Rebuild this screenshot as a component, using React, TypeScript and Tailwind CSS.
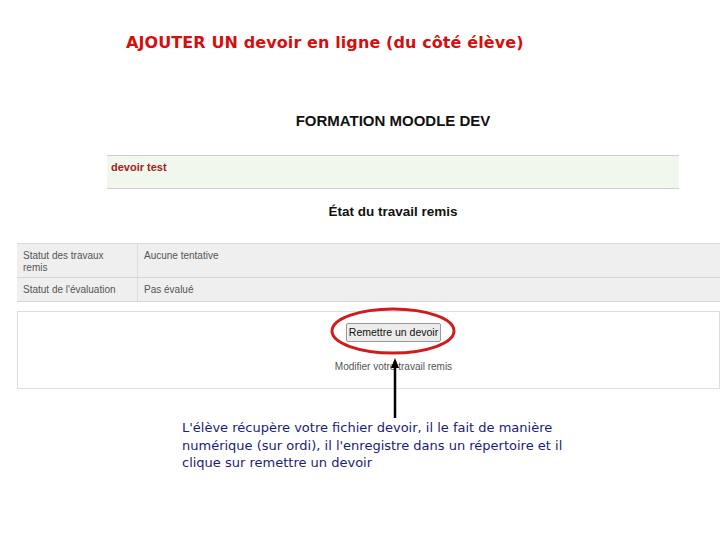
import React from "react";

export default function App() {
  return (
    <div className="relative w-[720px] h-[540px] bg-white overflow-hidden font-['Liberation_Sans',Arial,sans-serif]">
      <div className="pt-[33px] pl-[126px] h-[100px]">
        <div className="text-[#d40f0f] font-bold text-[16px] leading-[20px] font-['DejaVu_Sans',sans-serif] tracking-[0.1px]">
          AJOUTER UN devoir en ligne (du côté élève)
        </div>
      </div>
      <div className="pt-[12px] h-[55px] flex justify-center pl-[66px]">
        <div className="text-[15px] font-bold text-[#111] leading-[18px]">FORMATION MOODLE DEV</div>
      </div>
      <div className="ml-[107px] w-[572px] h-[34px] bg-[#f1f7ec] border-y border-[#cfcfcf] pl-[4px] pt-[4px]">
        <div className="text-[11px] font-bold text-[#a3201e] leading-[14px]">devoir test</div>
      </div>
      <div className="h-[54px] flex justify-center pl-[66px] pt-[15px]">
        <div className="text-[13.5px] font-bold text-[#111] leading-[16px]">État du travail remis</div>
      </div>
      <div className="ml-[17px] w-[703px] border-t border-[#dcdcdc] text-[10px] text-[#555] leading-[12px]">
        <div className="flex h-[34px] bg-[#efefef] border-b border-[#d6d6d6]">
          <div className="w-[121px] border-r border-[#dcdcdc] px-[6px] pt-[6px]">Statut des travaux<br />remis</div>
          <div className="px-[6px] pt-[6px]">Aucune tentative</div>
        </div>
        <div className="flex h-[24px] bg-[#efefef] border-b border-[#d6d6d6]">
          <div className="w-[121px] border-r border-[#dcdcdc] px-[6px] pt-[6px]">Statut de l'évaluation</div>
          <div className="px-[6px] pt-[6px]">Pas évalué</div>
        </div>
      </div>
      <div className="ml-[17px] mt-[9px] w-[703px] h-[78px] border border-[#dedede] flex flex-col items-center pl-[50px]">
        <div className="mt-[11px] h-[19px] px-[2px] border border-[#9a9a9a] bg-[#ececec] rounded-[2px] text-[10.5px] leading-[17px] text-[#111]">
          Remettre un devoir
        </div>
        <div className="mt-[19px] text-[10px] leading-[12px] text-[#555]">Modifier votre travail remis</div>
      </div>
      <div className="ml-[182px] mt-[30px] text-[13px] leading-[17.5px] text-[#1c1c78] font-['DejaVu_Sans',sans-serif]">
        L'élève récupère votre fichier devoir, il le fait de manière<br />
        numérique (sur ordi), il l'enregistre dans un répertoire et il<br />
        clique sur remettre un devoir
      </div>
      <svg className="absolute left-0 top-0" width="720" height="540" viewBox="0 0 720 540">
        <ellipse cx="393" cy="331" rx="61" ry="22" fill="none" stroke="#d11c1c" strokeWidth="3" />
        <line x1="395" y1="418" x2="395" y2="366" stroke="#000" strokeWidth="2.5" />
        <polygon points="395,358 391,368 399,368" fill="#000" />
      </svg>
    </div>
  );
}
